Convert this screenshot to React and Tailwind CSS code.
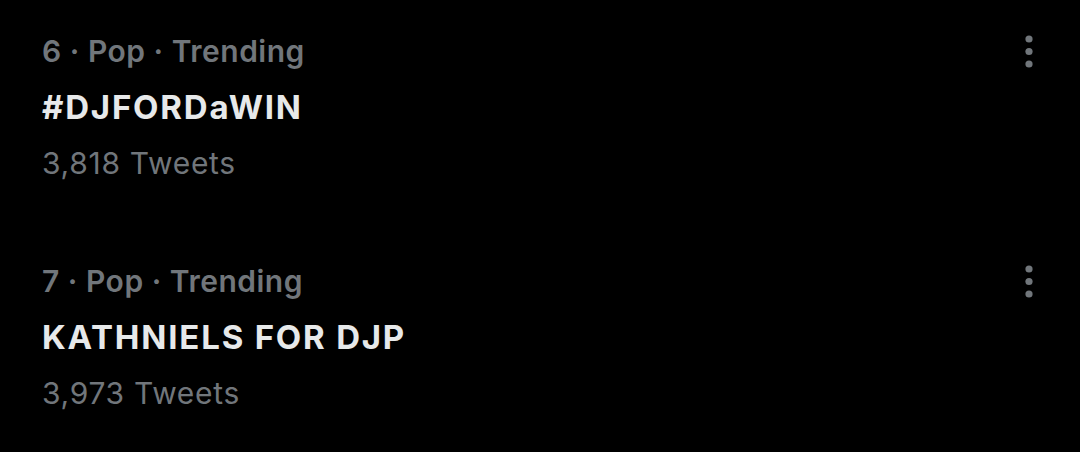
import React from 'react';

const trends = [
  { rank: 6, category: 'Pop', title: '#DJFORDaWIN', count: '3,818' },
  { rank: 7, category: 'Pop', title: 'KATHNIELS FOR DJP', count: '3,973' },
];

function MoreIcon() {
  return (
    <svg width="10" height="34" viewBox="0 0 10 34" className="text-[#71767b]">
      <circle cx="5" cy="5" r="3.6" fill="currentColor" />
      <circle cx="5" cy="17.5" r="3.6" fill="currentColor" />
      <circle cx="5" cy="30" r="3.6" fill="currentColor" />
    </svg>
  );
}

function TrendRow({ trend }) {
  return (
    <div className="flex items-start justify-between pl-[42px] pr-[46px] h-[230px]">
      <div className="flex flex-col">
        <span className="text-[30px] font-semibold tracking-[0.5px] text-[#71767b] leading-[56px]">
          {trend.rank} · {trend.category} · Trending
        </span>
        <span className="text-[33px] font-bold tracking-[1.8px] text-[#e7e9ea] leading-[56px]">
          {trend.title}
        </span>
        <span className="text-[30px] tracking-[0.7px] text-[#71767b] leading-[56px]">
          {trend.count} Tweets
        </span>
      </div>
      <div className="pt-[11px]">
        <MoreIcon />
      </div>
    </div>
  );
}

export default function App() {
  return (
    <div
      className="w-full h-[452px] bg-black overflow-hidden pt-[23px]"
      style={{ fontFamily: 'Inter, "Noto Sans", sans-serif' }}
    >
      {trends.map((t) => (
        <TrendRow key={t.rank} trend={t} />
      ))}
    </div>
  );
}
